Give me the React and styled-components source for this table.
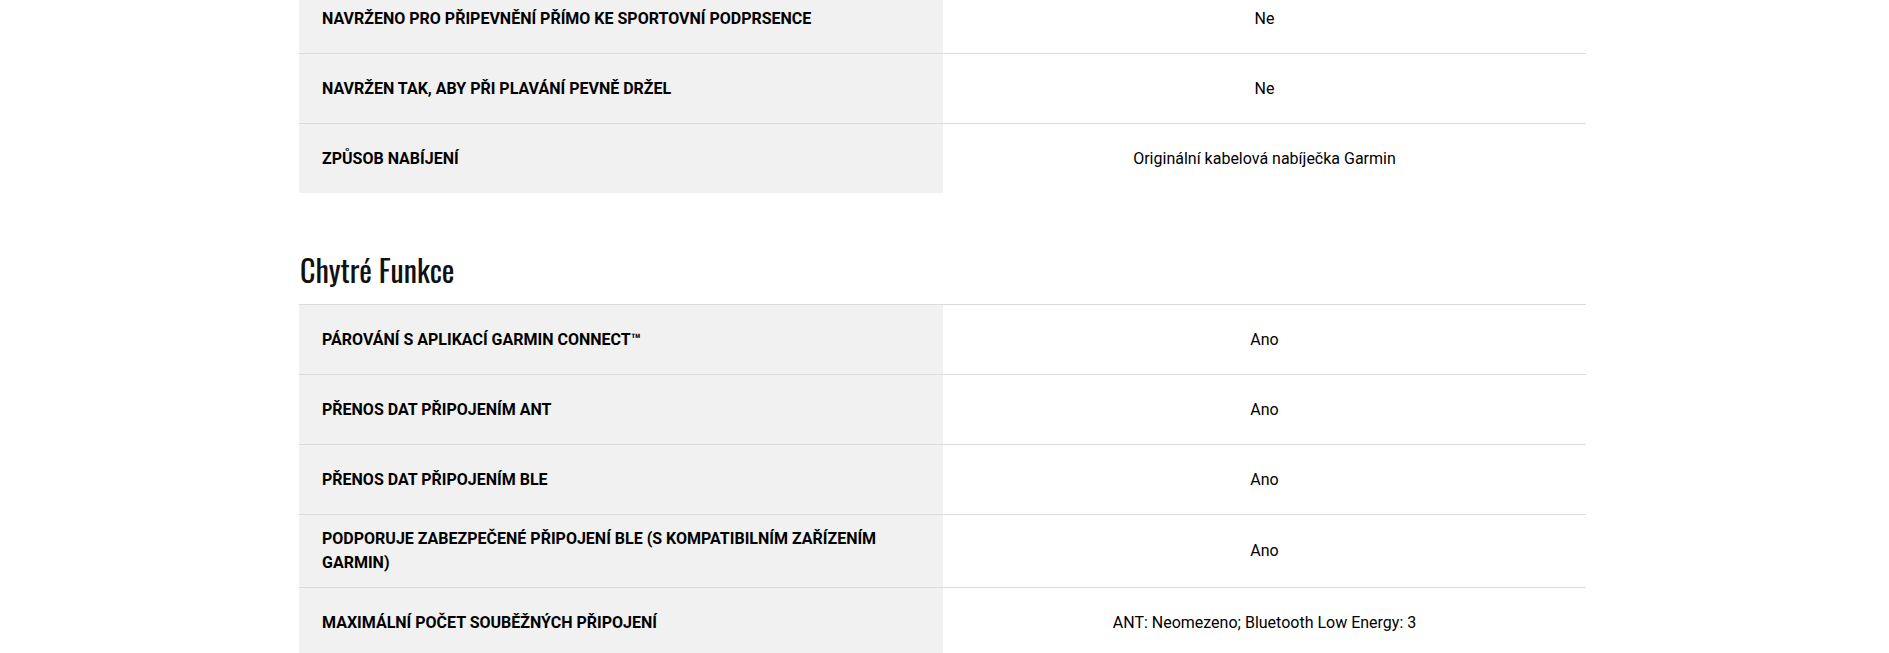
import React from "react";
import styled, { createGlobalStyle } from "styled-components";

const Global = createGlobalStyle`
  html, body { margin: 0; padding: 0; background: #fff; }
  body { font-family: Roboto, "Liberation Sans", sans-serif; color: #000; overflow: hidden; }
`;

const Page = styled.div`
  width: 1287px;
  margin: -17px 0 0 299px;
`;

const Section = styled.section`
  display: flex;
  flex-direction: column;
`;

const Heading = styled.h2`
  margin: 0;
  padding: 59px 0 0 1px;
  height: 52px;
  box-sizing: content-box;
  font-family: Oswald, "Liberation Sans Narrow", "DejaVu Sans Condensed", "Roboto Condensed", sans-serif;
  font-weight: 400;
  font-size: 30px;
  line-height: 36px;
  color: #111;
`;

const Table = styled.div`
  display: flex;
  flex-direction: column;
`;

const Row = styled.div`
  display: grid;
  grid-template-columns: 644px 1fr;
  border-top: 1px solid #dcdcdc;
`;

const Label = styled.div`
  background: #f1f1f1;
  min-height: 69px;
  box-sizing: border-box;
  padding: 12px 24px 12px 23px;
  display: flex;
  align-items: center;
  font-weight: 700;
  font-size: 16px;
  line-height: 24px;
  text-transform: uppercase;
  color: #000;
`;

const Value = styled.div`
  display: flex;
  align-items: center;
  justify-content: center;
  text-align: center;
  padding: 12px 24px;
  font-size: 16px;
  line-height: 24px;
  color: #000;
`;

const specs1 = [
  ["Navrženo pro připevnění přímo ke sportovní podprsence", "Ne"],
  ["Navržen tak, aby při plavání pevně držel", "Ne"],
  ["Způsob nabíjení", "Originální kabelová nabíječka Garmin"],
];

const specs2 = [
  ["Párování s aplikací Garmin Connect™", "Ano"],
  ["Přenos dat připojením ANT", "Ano"],
  ["Přenos dat připojením BLE", "Ano"],
  ["Podporuje zabezpečené připojení BLE (s kompatibilním zařízením Garmin)", "Ano"],
  ["Maximální počet souběžných připojení", "ANT: Neomezeno; Bluetooth Low Energy: 3"],
];

const SpecTable = ({ rows }) => (
  <Table>
    {rows.map(([l, v]) => (
      <Row key={l}>
        <Label>{l}</Label>
        <Value>{v}</Value>
      </Row>
    ))}
  </Table>
);

export default function App() {
  return (
    <>
      <Global />
      <Page>
        <Section>
          <SpecTable rows={specs1} />
        </Section>
        <Section>
          <Heading>Chytré Funkce</Heading>
          <SpecTable rows={specs2} />
        </Section>
      </Page>
    </>
  );
}
